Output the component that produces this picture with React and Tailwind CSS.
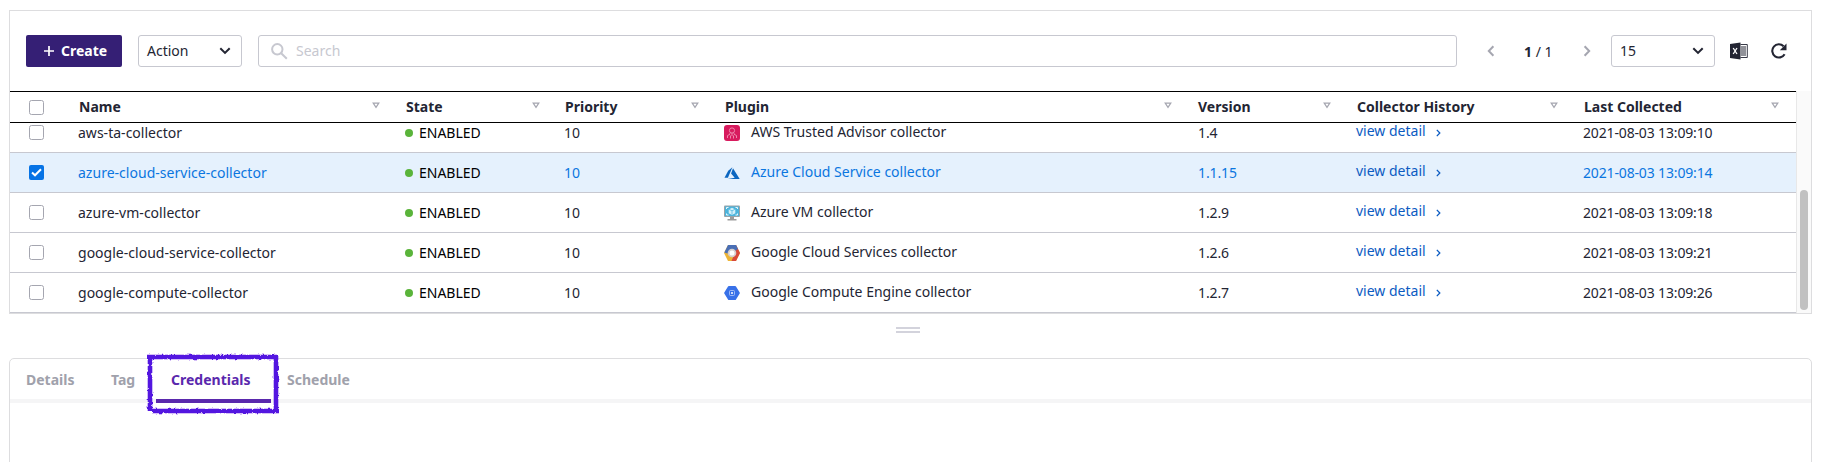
import React from "react";

const Chevron = ({ className }) => (
  <svg className={className} width="12" height="8" viewBox="0 0 12 8" fill="none" stroke="#232533" strokeWidth="2">
    <path d="M1.3 1.2 6 5.9l4.7-4.7" />
  </svg>
);

const Pager = ({ flip }) => (
  <svg width="8" height="12" viewBox="0 0 8 12" fill="none" stroke="#a5a6b0" strokeWidth="2" className={flip ? "rotate-180" : ""}>
    <path d="M6.4 1.2 1.8 6l4.6 4.8" />
  </svg>
);

const SortIcon = () => (
  <svg width="8" height="7" viewBox="0 0 8 7" fill="none" stroke="#a5a6b0" strokeWidth="1.2">
    <path d="M1.2 1.2h5.6L4 5.4z" />
  </svg>
);

const Checkbox = ({ checked }) =>
  checked ? (
    <svg width="15" height="15" viewBox="0 0 15 15">
      <rect width="15" height="15" rx="2" fill="#0673e5" />
      <path d="M3 7.5 6 10.3 12 4.2" fill="none" stroke="#fff" strokeWidth="2" />
    </svg>
  ) : (
    <svg width="15" height="15" viewBox="0 0 15 15">
      <rect x=".5" y=".5" width="14" height="14" rx="2" fill="#fff" stroke="#a5a6b0" />
    </svg>
  );

const TrustedAdvisorIcon = () => (
  <svg width="16" height="16" viewBox="0 0 16 16">
    <rect width="16" height="16" rx="3" fill="#d81b5e" />
    <g fill="none" stroke="#ee86ac" strokeWidth="1">
      <circle cx="8" cy="5.5" r="2.6" />
      <path d="M6.6 8 5 9.5M9.4 8 11 9.5M3.5 13v-2.5l2.5-1.2M12.500 13v-2.5L10 9.300M6.500 13.500V10.500M9.500 13.500V10.500M8 8v3" />
    </g>
  </svg>
);

const AzureIcon = () => (
  <svg width="16" height="16" viewBox="0 0 16 16" fill="#0b66c0">
    <path d="M8.400 2.200 4.200 5.800.500 12.700h3.400z" />
    <path d="M9 3.300 7.100 8.500l3.600 4.300-7 1.200H15.700z" />
  </svg>
);

const VmIcon = () => (
  <svg width="16" height="16" viewBox="0 0 16 16">
    <rect y="0.500" width="16" height="11.500" rx="1" fill="#9aa3a8" />
    <rect x="1" y="1.500" width="14" height="9.500" fill="#4bb4dc" />
    <path d="M2.500 4V2.500H4.500M11.500 2.500h2V4M2.500 8.500V10h2M11.500 10h2V8.500" fill="none" stroke="#e8f7fc" />
    <path d="m8 2.700 3.300 1.700v3.800L8 10 4.700 8.200V4.400z" fill="#d4f0fa" />
    <path d="m8 5.800 3-1.500M8 5.800v4M8 5.800 5 4.300" stroke="#55b9de" strokeWidth=".8" />
    <path d="M6 12h4v2h2.500v1.500h-9V14H6z" fill="#9b9b9b" />
  </svg>
);

const GoogleCloudIcon = () => (
  <svg width="16" height="16" viewBox="0 0 16 16">
    <path d="M4 0h8l4 8-4 8H4L0 8z" fill="#edb436" />
    <path d="M12 0 16 8l-4 8H7.500l2.500-6V4z" fill="#d9493a" />
    <path d="M4 0h8l2 4-3 2H7L3.500 8.500.300 7.400z" fill="#4a6fb5" />
    <circle cx="8" cy="8" r="4.300" fill="#d5cfce" />
    <circle cx="8" cy="8" r="2.500" fill="#fff" />
  </svg>
);

const ComputeIcon = () => (
  <svg width="16" height="16" viewBox="0 0 16 16">
    <path d="M4.800 1h6.400q.5 0 .8.500l3.700 6q.3.500 0 1l-3.700 6q-.3.500-.8.500H4.800q-.5 0-.8-.5l-3.700-6q-.3-.5 0-1l3.700-6q.3-.5.8-.5z" fill="#3871e8" />
    <rect x="5.500" y="5.500" width="5" height="5" rx="1" fill="none" stroke="#a9c3f7" strokeWidth=".9" />
    <circle cx="8" cy="8" r="1" fill="#fff" />
  </svg>
);

const rows = [
  ["aws-ta-collector", TrustedAdvisorIcon, "AWS Trusted Advisor collector", "1.4", "2021-08-03 13:09:10"],
  ["azure-cloud-service-collector", AzureIcon, "Azure Cloud Service collector", "1.1.15", "2021-08-03 13:09:14"],
  ["azure-vm-collector", VmIcon, "Azure VM collector", "1.2.9", "2021-08-03 13:09:18"],
  ["google-cloud-service-collector", GoogleCloudIcon, "Google Cloud Services collector", "1.2.6", "2021-08-03 13:09:21"],
  ["google-compute-collector", ComputeIcon, "Google Compute Engine collector", "1.2.7", "2021-08-03 13:09:26"],
];

const cols = "grid grid-cols-[53px_327px_159px_160px_473px_159px_227px_228px]";
const headers = ["Name", "State", "Priority", "Plugin", "Version", "Collector History", "Last Collected"];

function Toolbar() {
  return (
    <div className="flex h-[80px] items-center pr-[23px] pl-4">
      <button className="flex h-8 w-24 items-center rounded-[2px] bg-[#351f75] pl-[18px] font-bold text-white">
        <svg width="10" height="10" viewBox="0 0 10 10" stroke="#fff" strokeWidth="1.700">
          <path d="M5 0v10M0 5h10" />
        </svg>
        <span className="ml-[7px]">Create</span>
      </button>
      <div className="ml-4 flex h-8 w-[104px] items-center justify-between rounded-[3px] border border-[#c7c8d0] pr-[10px] pl-2">
        Action
        <Chevron />
      </div>
      <div className="ml-4 flex h-8 flex-1 items-center rounded-[3px] border border-[#c7c8d0] pl-3 text-[#c7c8d0]">
        <svg width="17" height="17" viewBox="0 0 17 17" fill="none" stroke="#c7c8d0" strokeWidth="2">
          <circle cx="6.300" cy="6.300" r="5.200" />
          <path d="m10.200 10.200 5.600 5.600" />
        </svg>
        <span className="ml-2">Search</span>
      </div>
      <div className="ml-[30px] flex items-center">
        <Pager />
        <div className="ml-[29px] w-[59px] pt-0.5">
          <b>1</b> / 1
        </div>
        <Pager flip />
      </div>
      <div className="ml-5 flex h-8 w-[104px] items-center justify-between rounded-[3px] border border-[#c7c8d0] pr-[10px] pl-2">
        15
        <Chevron />
      </div>
      <svg className="ml-[15px]" width="18" height="18" viewBox="0 0 18 18">
        <path d="M0 2 10.500 0.500v17L0 16z" fill="#232533" />
        <path d="M10.500 2.500h6.800v13h-6.800" fill="none" stroke="#232533" strokeWidth=".9" />
        <path d="M11 5h5M11 7h5M11 9h5M11 11h5M11 13h5" stroke="#232533" strokeWidth="1" />
        <path d="m3.200 6 3.800 6M7 6l-3.800 6" stroke="#fff" strokeWidth="1.300" />
      </svg>
      <svg className="ml-[22px]" width="18" height="18" viewBox="0 0 18 18">
        <path d="M14.600 12.200A6.600 6.600 0 1 1 13.600 4.300" fill="none" stroke="#232533" strokeWidth="2.100" />
        <path d="M16.500 1.500v6.700H9.800z" fill="#232533" />
      </svg>
    </div>
  );
}

function Row({ row, selected }) {
  const [name, Icon, plugin, version, date] = row;
  return (
    <div className={`${cols} h-10 shrink-0 items-center border-b border-[#c7c8d0] ${selected ? "bg-[#e5f1fd] text-[#0b76e0]" : ""}`}>
      <div className="pl-[18.5px]"><Checkbox checked={selected} /></div>
      <div className="pl-[15px] tracking-[0.02px]">{name}</div>
      <div className="flex items-center pl-[15px] text-black">
        <span className="mr-[6px] h-2 w-2 rounded-full bg-[#5ab43a]" />
        ENABLED
      </div>
      <div className="pl-[15px]">10</div>
      <div className="flex items-start self-start pt-[9px] pl-[15px]">
        <span className="pt-[3px]"><Icon /></span>
        <span className="ml-[11px]">{plugin}</span>
      </div>
      <div className="pl-4 tracking-[-0.1px]">{version}</div>
      <div className="flex items-center pl-[15px] text-[#0b5bc2]">
        <span className="-mt-1">view detail</span>
        <svg className="ml-[10px]" width="5" height="8" viewBox="0 0 5 8" fill="none" stroke="#0b5bc2" strokeWidth="1.300">
          <path d="m.8.900 3 3.100-3 3.100" />
        </svg>
      </div>
      <div className="pl-[15px] tracking-[-0.15px]">{date}</div>
    </div>
  );
}

function SketchFrame() {
  return (
    <svg className="pointer-events-none absolute -top-[6px] left-[136px]" width="134" height="62" viewBox="0 0 134 62" fill="none" stroke="#5316e0">
      <defs>
        <filter id="rough" x="-5%" y="-10%" width="110%" height="120%">
          <feTurbulence type="fractalNoise" baseFrequency="0.350" numOctaves="2" seed="4" result="n" />
          <feDisplacementMap in="SourceGraphic" in2="n" scale="3" xChannelSelector="R" yChannelSelector="G" />
        </filter>
      </defs>
      <path filter="url(#rough)" strokeWidth="4.600" d="M1 4h131M130 2v58M132 58H6M4 2v56" />
    </svg>
  );
}

export default function App() {
  return (
    <div className="h-[462px] overflow-hidden bg-white pt-[10px] pr-4 pl-[9px] font-['Noto_Sans',sans-serif] text-[14px] leading-5 text-[#232533]">
      <section className="h-[304px] border border-[#dddddf]">
        <Toolbar />
        <div className="flex h-[222px]">
          <div className="flex w-[1786px] flex-col overflow-hidden">
            <div className={`${cols} h-8 shrink-0 items-center border-y border-black font-bold`}>
              <div className="pt-px pl-[18.5px]"><Checkbox /></div>
              {headers.map((h, i) => (
                <div key={h} className={`flex items-center justify-between pl-4 ${i === 6 ? "pr-[17px]" : i === 1 ? "pr-[9px]" : "pr-[10px]"}`}>
                  {h}
                  <span className="-mt-[3px]"><SortIcon /></span>
                </div>
              ))}
            </div>
            <div className="flex h-[190px] flex-col justify-end overflow-hidden">
              {rows.map((r, i) => (
                <Row key={r[0]} row={r} selected={i === 1} />
              ))}
            </div>
          </div>
          <div className="flex flex-1 items-end border-l border-[#e8e8e8] bg-[#fafafa] pb-[3px] pl-[3px]">
            <div className="h-[120px] w-2 rounded-full bg-[#c1c1c1]" />
          </div>
        </div>
      </section>
      <div className="flex h-[44px] flex-col items-center gap-[2px] pt-[13px] pr-[5px]">
        <div className="h-[2px] w-6 bg-[#d3d3dc]" />
        <div className="h-[2px] w-6 bg-[#d3d3dc]" />
      </div>
      <section className="relative h-[140px] rounded-t-[5px] border border-[#dddddf]">
        <div className="flex h-[44px] items-start border-b-4 border-[#f5f5f6] pt-[11px] pl-4 font-bold text-[#a0a1ab]">
          <div className="w-[85px]">Details</div>
          <div className="w-[45px]">Tag</div>
          <div className="-mt-[11px] flex h-[44px] w-[115px] items-start border-b-4 border-[#5a28ad] pt-[11px] pl-[15px] text-[#5a28ad]">
            Credentials
          </div>
          <div className="ml-4">Schedule</div>
        </div>
        <SketchFrame />
      </section>
    </div>
  );
}
